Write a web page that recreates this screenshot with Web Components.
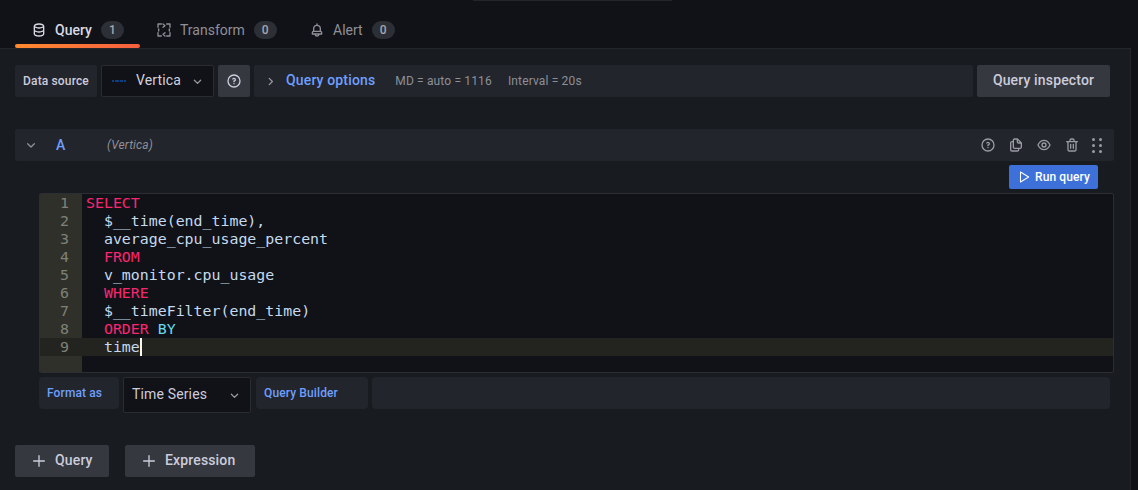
<!DOCTYPE html>
<html>
<head>
<meta charset="utf-8">
<title>Query editor</title>
<style>
  html, body { margin: 0; height: 490px; overflow: hidden; background: #111217; }
  body { font-family: Roboto, sans-serif; color: #ccccdc; }
</style>
</head>
<body>
<query-editor>
  <editor-tabs slot="tabs"></editor-tabs>
  <options-bar slot="options"></options-bar>
  <query-row slot="row"></query-row>
  <sql-pane slot="sql"></sql-pane>
  <format-bar slot="format"></format-bar>
  <add-buttons slot="add"></add-buttons>
</query-editor>

<script>
// filled icons
const SOLID = {
  database: 'M12,2C7.58,2,4,3.79,4,6V18c0,2.21,3.58,4,8,4s8-1.79,8-4V6C20,3.79,16.42,2,12,2Zm6,16c0,.71-2.28,2-6,2s-6-1.29-6-2V14.77A13.16,13.16,0,0,0,12,16a13.16,13.16,0,0,0,6-1.23Zm0-6c0,.71-2.28,2-6,2s-6-1.29-6-2V8.77A13.16,13.16,0,0,0,12,10a13.16,13.16,0,0,0,6-1.23ZM12,8C8.28,8,6,6.71,6,6s2.28-2,6-2,6,1.29,6,2S15.72,8,12,8Z',
  bell: 'M18,13.18V10a6,6,0,0,0-5-5.91V3a1,1,0,0,0-2,0V4.09A6,6,0,0,0,6,10v3.18A3,3,0,0,0,4,16v2a1,1,0,0,0,1,1H8.14a4,4,0,0,0,7.72,0H19a1,1,0,0,0,1-1V16A3,3,0,0,0,18,13.18ZM8,10a4,4,0,0,1,8,0v3H8Zm4,10a2,2,0,0,1-1.72-1h3.44A2,2,0,0,1,12,20Zm6-3H6V16a1,1,0,0,1,1-1H17a1,1,0,0,1,1,1Z',
  help: 'M11.29,15.29a1.58,1.58,0,0,0-.12.15.76.76,0,0,0-.09.18.64.64,0,0,0-.06.18,1.36,1.36,0,0,0,0,.2.84.84,0,0,0,.08.38.9.9,0,0,0,.54.54.94.94,0,0,0,.76,0,.9.9,0,0,0,.54-.54A1,1,0,0,0,13,16a1,1,0,0,0-.29-.71A1,1,0,0,0,11.29,15.29ZM12,2A10,10,0,1,0,22,12,10,10,0,0,0,12,2Zm0,18a8,8,0,1,1,8-8A8,8,0,0,1,12,20ZM12,7A3,3,0,0,0,9.4,8.5a1,1,0,1,0,1.73,1A1,1,0,0,1,12,9a1,1,0,0,1,0,2,1,1,0,0,0-1,1v1a1,1,0,0,0,2,0v-.18A3,3,0,0,0,12,7Z',
  copy: 'M21,8.94a1.31,1.31,0,0,0-.06-.27l0-.09a1.07,1.07,0,0,0-.19-.28h0l-6-6h0a1.07,1.07,0,0,0-.28-.19.32.32,0,0,0-.09,0A.88.88,0,0,0,14.05,2H10A3,3,0,0,0,7,5V6H6A3,3,0,0,0,3,9V19a3,3,0,0,0,3,3h8a3,3,0,0,0,3-3V18h1a3,3,0,0,0,3-3V9S21,9,21,8.94ZM15,5.41,17.59,8H16a1,1,0,0,1-1-1ZM15,19a1,1,0,0,1-1,1H6a1,1,0,0,1-1-1V9A1,1,0,0,1,6,8H7v7a3,3,0,0,0,3,3h5Zm4-4a1,1,0,0,1-1,1H10a1,1,0,0,1-1-1V5a1,1,0,0,1,1-1h3V7a3,3,0,0,0,3,3h3Z',
  eye: 'M21.92,11.6C19.9,6.91,16.1,4,12,4S4.1,6.91,2.08,11.6a1,1,0,0,0,0,.8C4.1,17.09,7.9,20,12,20s7.9-2.91,9.92-7.6A1,1,0,0,0,21.92,11.6ZM12,18c-3.17,0-6.17-2.29-7.9-6C5.83,8.29,8.83,6,12,6s6.17,2.29,7.9,6C18.17,15.71,15.17,18,12,18ZM12,8a4,4,0,1,0,4,4A4,4,0,0,0,12,8Zm0,6a2,2,0,1,1,2-2A2,2,0,0,1,12,14Z',
  trash: 'M10,18a1,1,0,0,0,1-1V11a1,1,0,0,0-2,0v6A1,1,0,0,0,10,18ZM20,6H16V5a3,3,0,0,0-3-3H11A3,3,0,0,0,8,5V6H4A1,1,0,0,0,4,8H5V19a3,3,0,0,0,3,3h8a3,3,0,0,0,3-3V8h1a1,1,0,0,0,0-2ZM10,5a1,1,0,0,1,1-1h2a1,1,0,0,1,1,1V6H10Zm7,14a1,1,0,0,1-1,1H8a1,1,0,0,1-1-1V8H17Zm-3-1a1,1,0,0,0,1-1V11a1,1,0,0,0-2,0v6A1,1,0,0,0,14,18Z'
};
// stroked icons
const LINE = {
  transform: '<path d="M3 8V3h5M16 3h5v5M21 16v5h-5M8 21H3v-5"/><path d="M10.500 3l3 2.500-3 2.500M13.500 16l-3 2.500 3 2.500M4 10.500v3M20 10.500v3"/>',
  play: '<path d="M6 3.500v17L20 12z"/>',
  plus: '<path d="M12 4v16M4 12h16"/>',
  down: '<path d="M7 10l5 5 5-5"/>',
  right: '<path d="M10 7l5 5-5 5"/>'
};

function icon(name, size, width) {
  if (SOLID[name]) {
    return `<svg width="${size}" height="${size}" viewBox="0 0 24 24" fill="currentColor" aria-hidden="true"><path d="${SOLID[name]}"/></svg>`;
  }
  return `<svg width="${size}" height="${size}" viewBox="0 0 24 24" fill="none" stroke="currentColor" stroke-width="${width || 2}" stroke-linecap="round" stroke-linejoin="round" aria-hidden="true">${LINE[name]}</svg>`;
}

class QueryEditor extends HTMLElement {
  constructor() {
    super();
    const shadow = this.attachShadow({ mode: 'open' });
    shadow.innerHTML = `
      <style>
        :host { display: block; height: 490px; background: #111217; }
        .panel {
          margin-right: 7px;
          height: 442px;
          background: #181b1f;
          border-top: 1px solid #24262b;
          border-right: 1px solid #24262b;
          padding: 16px 20px 0 15px;
          box-sizing: border-box;
          display: flex;
          flex-direction: column;
        }
        ::slotted([slot=sql]), ::slotted([slot=format]) { margin-left: 24px; }
      </style>
      <slot name="tabs"></slot>
      <div class="panel">
        <slot name="options"></slot>
        <slot name="row"></slot>
        <slot name="sql"></slot>
        <slot name="format"></slot>
        <slot name="add"></slot>
      </div>
    `;
  }
}

class EditorTabs extends HTMLElement {
  constructor() {
    super();
    const shadow = this.attachShadow({ mode: 'open' });
    const tabs = [['database', 'Query', 1, true], ['transform', 'Transform', 0], ['bell', 'Alert', 0]];
    shadow.innerHTML = `
      <style>
        :host { display: flex; height: 48px; padding-left: 15px; box-sizing: border-box; font-size: 14px; position: relative; }
        :host::before {
          content: '';
          position: absolute;
          left: 473px; top: 0;
          width: 199px; height: 1px;
          background: #22252b;
        }
        .tab {
          height: 48px;
          box-sizing: border-box;
          padding: 12px 0 0 16px;
          width: 125px;
          display: flex;
          align-items: center;
          color: #8e8f99;
          position: relative;
        }
        .tab + .tab { width: 153px; }
        .tab.on { color: #d8d9e2; font-weight: 500; }
        .tab.on::after {
          content: '';
          position: absolute;
          left: 0; right: 0; bottom: 0;
          height: 4px;
          border-radius: 2px;
          background: linear-gradient(90deg, #ff8a30, #f55f3e);
        }
        svg { margin-right: 8px; flex: none; }
        .n {
          margin-left: 9px;
          width: 23px;
          height: 18px;
          line-height: 18px;
          border-radius: 9px;
          background: #2c2f35;
          text-align: center;
          font-size: 12px;
          font-weight: 500;
          color: #a5a7b1;
        }
      </style>
      ${tabs.map(t => `<div class="tab${t[3] ? ' on' : ''}">${icon(t[0], 16, 2)}<span>${t[1]}</span><span class="n">${t[2]}</span></div>`).join('')}
    `;
  }
}

class OptionsBar extends HTMLElement {
  constructor() {
    super();
    const shadow = this.attachShadow({ mode: 'open' });
    shadow.innerHTML = `
      <style>
        :host { display: flex; gap: 4px; height: 32px; font-size: 12px; letter-spacing: .15px; }
        .cell { background: #22252b; border-radius: 2px; display: flex; align-items: center; box-sizing: border-box; }
        .label { width: 82px; justify-content: center; font-weight: 500; color: #ccccdc; }
        .select {
          width: 113px;
          background: #111217;
          border: 1px solid #2a2c32;
          padding: 0 0 0 10px;
          font-size: 14px;
          color: #d0d1dc;
        }
        .select > span:first-of-type { padding-bottom: 2px; }
        .logo { width: 14px; height: 6px; flex: none; margin-right: 10px; }
        .select .arrow { margin-left: 9px; color: #9a9ba5; display: flex; }
        .help { width: 32px; justify-content: center; background: #35383e; color: #ccccdc; }
        .opts { flex: 1; padding-left: 9px; color: #8e8f99; }
        .opts svg { color: #9a9ba5; }
        .title { margin: 0 20px 0 8px; padding-bottom: 2px; font-size: 14px; font-weight: 500; color: #6e9fff; letter-spacing: .15px; }
        .opts span + span + span { margin-left: 16px; }
        .inspect {
          width: 133px;
          justify-content: center;
          padding-bottom: 2px;
          background: #35383e;
          font-size: 14px;
          font-weight: 500;
          color: #ccccdc;
          letter-spacing: .15px;
        }
      </style>
      <div class="cell label">Data source</div>
      <div class="cell select">
        <svg class="logo" viewBox="0 0 14 6"><path d="M0 3h2M3 3h4M8 3h3M12 3h2" stroke="#0a4fa8" stroke-width="1.600"/></svg>
        <span>Vertica</span><span class="arrow">${icon('down', 15)}</span>
      </div>
      <div class="cell help">${icon('help', 16)}</div>
      <div class="cell opts">${icon('right', 15)}<span class="title">Query options</span><span>MD = auto = 1116</span><span>Interval = 20s</span></div>
      <div class="cell inspect">Query inspector</div>
    `;
  }
}

class QueryRow extends HTMLElement {
  constructor() {
    super();
    const shadow = this.attachShadow({ mode: 'open' });
    shadow.innerHTML = `
      <style>
        :host { display: block; margin-top: 32px; margin-right: -4px; }
        .head {
          height: 32px;
          background: #22252b;
          border-radius: 2px;
          display: flex;
          align-items: center;
          padding: 0 9px 0 8px;
          color: #8e8f99;
        }
        .letter { margin-left: 17px; width: 51px; padding-bottom: 1px; font-size: 14px; font-weight: 500; color: #6e9fff; }
        em { font-size: 12px; letter-spacing: .12px; color: #8e8f99; }
        .acts { margin-left: auto; display: flex; gap: 12px; color: #9a9ba5; }
        .grip { margin-left: -3px; width: 16px; height: 16px; display: grid; grid-template-columns: 3px 3px; gap: 3px 4px; justify-content: center; align-content: center; }
        .grip i { width: 3px; height: 3px; border-radius: 50%; background: #9a9ba5; }
        .run { display: flex; justify-content: flex-end; padding: 4px 16px 4px 0; }
        .run div {
          width: 89px;
          height: 24px;
          box-sizing: border-box;
          background: #3d71d9;
          border-radius: 2px;
          color: #fff;
          font: 500 12px Roboto, sans-serif;
          letter-spacing: .1px;
          display: flex;
          align-items: center;
          justify-content: center;
          gap: 4px;
        }
      </style>
      <div class="head">
        ${icon('down', 16)}
        <span class="letter">A</span>
        <em>(Vertica)</em>
        <div class="acts">
          ${icon('help', 16)}${icon('copy', 16)}${icon('eye', 16)}${icon('trash', 16)}
          <div class="grip"><i></i><i></i><i></i><i></i><i></i><i></i></div>
        </div>
      </div>
      <div class="run"><div>${icon('play', 14, 1.8)}Run query</div></div>
    `;
  }
}

class SqlPane extends HTMLElement {
  constructor() {
    super();
    const shadow = this.attachShadow({ mode: 'open' });
    const k = s => `<b>${s}</b>`;
    const lines = [
      k('SELECT'),
      '  $__time(end_time),',
      '  average_cpu_usage_percent',
      '  ' + k('FROM'),
      '  v_monitor.cpu_usage',
      '  ' + k('WHERE'),
      '  $__timeFilter(end_time)',
      '  ' + k('ORDER') + ' <u>BY</u>',
      '  time<s></s>'
    ];
    shadow.innerHTML = `
      <style>
        :host {
          display: block;
          height: 180px;
          margin-right: -4px;
          box-sizing: border-box;
          border: 1px solid #2c2e33;
          border-radius: 2px;
          background: #111217;
          font: 14.9px/18px "DejaVu Sans Mono", monospace;
          color: #c5daee;
          overflow: hidden;
        }
        .wrap { display: grid; grid-template-columns: 42px 1fr; height: 100%; }
        .gutter { background: #2f3029; color: #7f8278; text-align: right; }
        .gutter div { padding-right: 13px; }
        .gutter .cur { background: #23241f; }
        .code div { padding-left: 4px; white-space: pre; height: 18px; }
        .code .cur { background: #23241f; }
        b { font-weight: 400; color: #f92672; }
        u { text-decoration: none; color: #66d9ef; }
        s { display: inline-block; width: 2px; height: 18px; background: #f8f8f0; vertical-align: top; }
      </style>
      <div class="wrap">
        <div class="gutter">${lines.map((l, i) => `<div${i === 8 ? ' class="cur"' : ''}>${i + 1}</div>`).join('')}</div>
        <div class="code">${lines.map((l, i) => `<div${i === 8 ? ' class="cur"' : ''}>${l}</div>`).join('')}</div>
      </div>
    `;
  }
}

class FormatBar extends HTMLElement {
  constructor() {
    super();
    const shadow = this.attachShadow({ mode: 'open' });
    shadow.innerHTML = `
      <style>
        :host { display: flex; gap: 4px; height: 36px; margin-top: 4px; font-size: 12px; font-weight: 500; color: #6e9fff; letter-spacing: .12px; }
        .cell { height: 32px; background: #22252b; border-radius: 4px; display: flex; align-items: center; padding-left: 8px; box-sizing: border-box; }
        .fmt { width: 80px; }
        .select {
          width: 128px;
          height: 36px;
          background: #111217;
          border: 1px solid #2a2c32;
          border-radius: 2px;
          padding-left: 8px;
          font-size: 14px;
          font-weight: 400;
          letter-spacing: .15px;
          color: #ccccdc;
          display: flex;
          align-items: center;
          box-sizing: border-box;
          margin-right: 1px;
        }
        .select span { padding-bottom: 2px; }
        .select svg { margin-left: auto; margin-right: 8px; color: #9a9ba5; }
        .builder { width: 112px; }
        .fill { flex: 1; }
      </style>
      <div class="cell fmt">Format as</div>
      <div class="select"><span>Time Series</span>${icon('down', 15)}</div>
      <div class="cell builder">Query Builder</div>
      <div class="cell fill"></div>
    `;
  }
}

class AddButtons extends HTMLElement {
  constructor() {
    super();
    const shadow = this.attachShadow({ mode: 'open' });
    shadow.innerHTML = `
      <style>
        :host { display: flex; gap: 16px; margin-top: 32px; font-size: 14px; font-weight: 500; color: #ccccdc; letter-spacing: .15px; }
        .btn {
          height: 32px;
          background: #35383e;
          border-radius: 2px;
          display: flex;
          align-items: center;
          padding: 0 0 2px 16px;
          box-sizing: border-box;
        }
        .q { width: 94px; }
        .e { width: 130px; }
        svg { margin: 2px 8px 0 0; }
      </style>
      <div class="btn q">${icon('plus', 16)}Query</div>
      <div class="btn e">${icon('plus', 16)}Expression</div>
    `;
  }
}

customElements.define('query-editor', QueryEditor);
customElements.define('editor-tabs', EditorTabs);
customElements.define('options-bar', OptionsBar);
customElements.define('query-row', QueryRow);
customElements.define('sql-pane', SqlPane);
customElements.define('format-bar', FormatBar);
customElements.define('add-buttons', AddButtons);
</script>
</body>
</html>
